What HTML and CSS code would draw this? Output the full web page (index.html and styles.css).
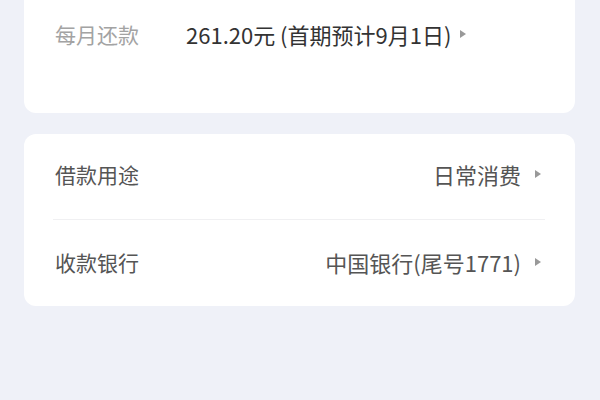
FILE: index.html
```html
<!DOCTYPE html>
<html lang="zh-CN">
<head>
  <meta charset="UTF-8">
  <meta name="viewport" content="width=device-width, initial-scale=1.0">
  <title>借款确认</title>
  <link rel="stylesheet" href="styles.css">
</head>
<body>

  <!-- Repayment summary -->
  <div class="card card-plan">
    <div class="plan-row">
      <span class="plan-label">借款期限</span>
      <span class="plan-value">12个月</span>
    </div>
    <div class="plan-row">
      <span class="plan-label">每月还款</span>
      <span class="plan-value">261.20元 (首期预计9月1日)</span>
      <span class="arrow"></span>
    </div>
  </div>

  <!-- Purpose and bank -->
  <div class="card">
    <div class="list-row">
      <span class="list-label">借款用途</span>
      <span class="list-value">日常消费</span>
      <span class="arrow"></span>
    </div>
    <div class="list-row">
      <span class="list-label">收款银行</span>
      <span class="list-value">中国银行(尾号1771)</span>
      <span class="arrow"></span>
    </div>
  </div>

</body>
</html>
```
FILE: styles.css
```css
body {
  margin: 0;
  padding: 0 25px 0 24px;
  background-color: #eff1f8;
  font-family: 'Noto Sans CJK SC', 'Noto Sans', sans-serif;
  overflow: hidden;
}

.card {
  background-color: #fff;
  border-radius: 12px;
  padding: 0 30px 0 29px;
  margin-bottom: 21px;
}

.card-plan {
  margin-top: -44px;
  padding-bottom: 53px;
}

.plan-row {
  display: flex;
  align-items: center;
  height: 52px;
}

.plan-label {
  width: 131px;
  padding-left: 2px;
  font-size: 21px;
  color: #a3a3a3;
  flex-shrink: 0;
}

.plan-value {
  font-size: 22px;
  color: #333;
  margin-right: 9px;
}

.list-row {
  display: flex;
  align-items: center;
  box-sizing: border-box;
  height: 85px;
  padding-bottom: 6px;
  color: #555;
}

.list-row + .list-row {
  height: 87px;
  padding-bottom: 3px;
  border-top: 1px solid #f0f0f2;
}

.list-label {
  flex: 1;
  padding-left: 2px;
  font-size: 21px;
}

.list-value {
  font-size: 22px;
  margin-right: 14px;
}

.arrow {
  width: 0;
  height: 0;
  margin-right: 4px;
  border-top: 4px solid transparent;
  border-bottom: 4px solid transparent;
  border-left: 6px solid #999;
}
```
